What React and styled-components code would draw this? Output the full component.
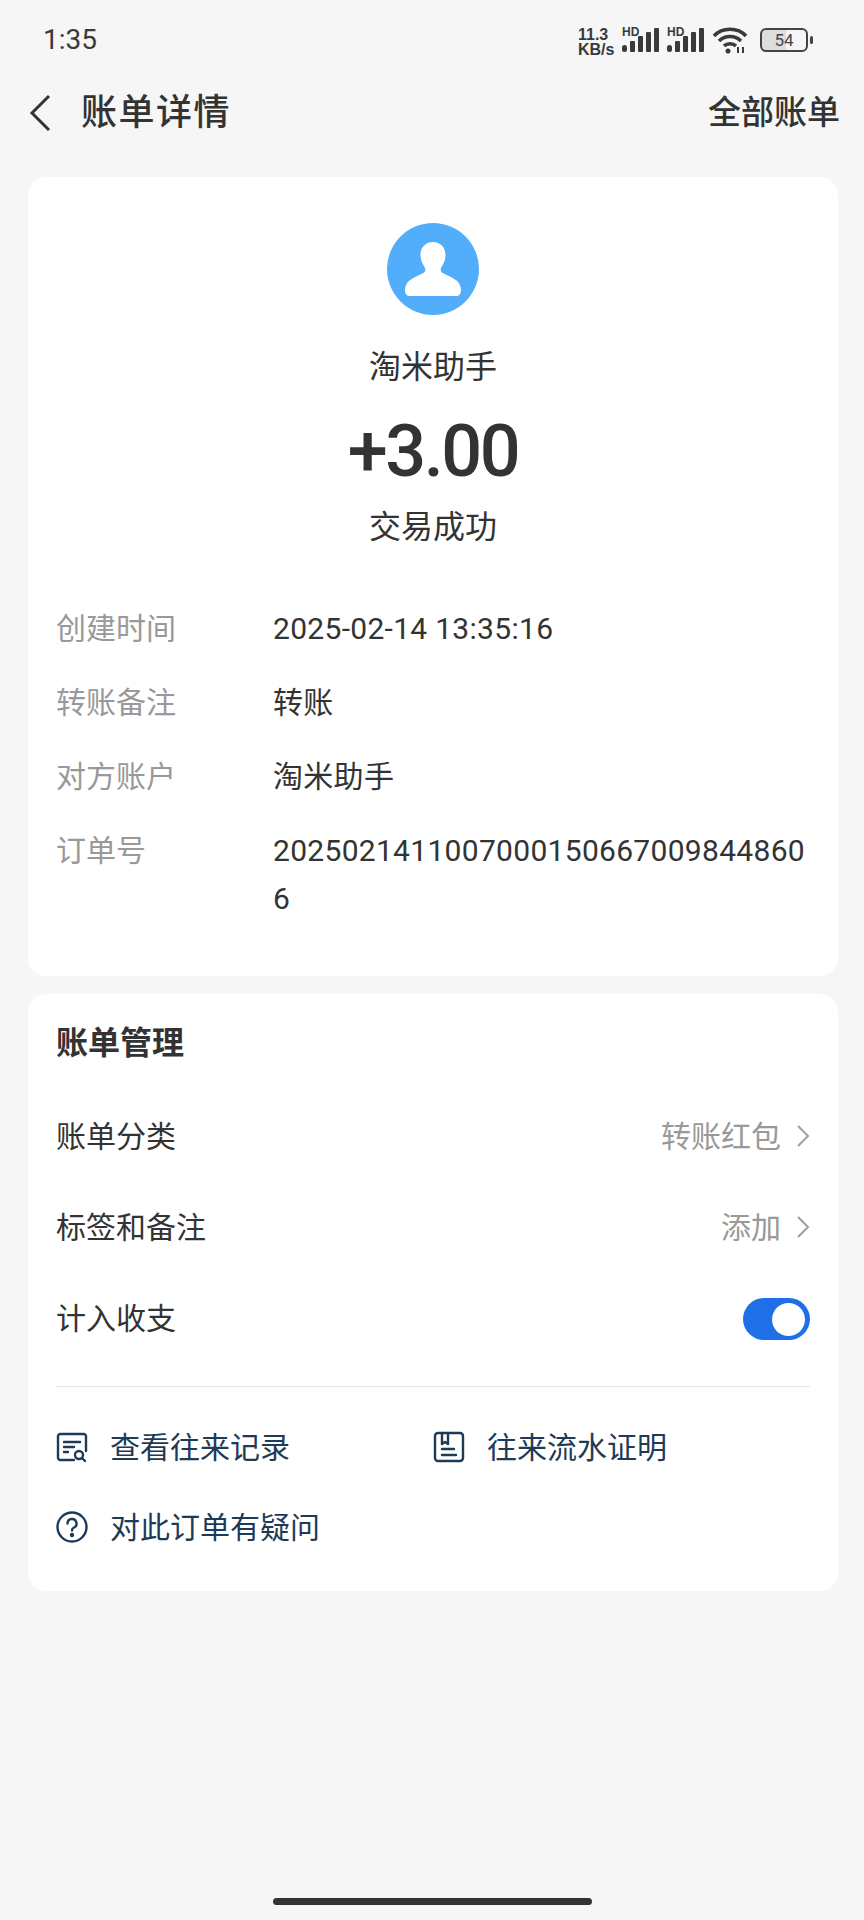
import React from 'react';
import styled, { createGlobalStyle } from 'styled-components';

const CJK = `Roboto, "Noto Sans CJK SC", sans-serif`;

const GlobalStyle = createGlobalStyle`
    html, body {
        margin: 0;
        padding: 0;
        background: #f6f6f6;
    }
    * {
        box-sizing: border-box;
    }
`;

const Page = styled.div`
    width: 864px;
    height: 1920px;
    background: #f6f6f6;
    color: #333;
    font-family: ${CJK};
    display: flex;
    flex-direction: column;
    overflow: hidden;
`;

const StatusBar = styled.div`
    height: 80px;
    padding: 0 56px 0 43px;
    display: flex;
    align-items: center;
    justify-content: space-between;
`;

const Time = styled.span`
    font-size: 28px;
    line-height: 1;
    color: #3a3a3a;
`;

const StatusIcons = styled.div`
    display: flex;
    align-items: center;
    gap: 7px;
`;

const NetSpeed = styled.div`
    font-family: "Liberation Sans", sans-serif;
    font-size: 16px;
    line-height: 15px;
    font-weight: 700;
    color: #3a3a3a;
    width: 37px;
    margin-top: 3px;
`;

const Signal = styled.div`
    position: relative;
    width: 38px;
    height: 24px;
    span {
        position: absolute;
        left: 0;
        top: -1px;
        font-family: "Liberation Sans", sans-serif;
        font-size: 12px;
        line-height: 10px;
        font-weight: 700;
        color: #3a3a3a;
    }
    svg {
        display: block;
    }
`;

const Battery = styled.div`
    width: 48px;
    height: 24px;
    border: 2px solid #444;
    border-radius: 6px;
    background: linear-gradient(90deg, #ddd 54%, #f6f6f6 54%);
    font-size: 17px;
    line-height: 20px;
    text-align: center;
    color: #444;
    position: relative;
    margin-left: 5px;
    &::after {
        content: "";
        position: absolute;
        right: -7px;
        top: 6px;
        width: 3px;
        height: 8px;
        border-radius: 2px;
        background: #444;
    }
`;

const Header = styled.div`
    height: 60px;
    margin-bottom: 37px;
    padding: 0 24px 0 28px;
    display: flex;
    align-items: center;
`;

const BackIcon = styled.svg`
    width: 24px;
    height: 40px;
    margin: 5px 29px 0 0;
`;

const Title = styled.h1`
    flex: 1;
    margin: 5px 0 0;
    font-size: 36px;
    line-height: 60px;
    font-weight: 500;
    letter-spacing: 1.5px;
    color: #333;
`;

const HeaderLink = styled.span`
    font-size: 33px;
    font-weight: 500;
    color: #333;
`;

const Card = styled.section`
    margin: ${p => p.$top || 0}px 26px 0 28px;
    background: #fff;
    border-radius: 18px;
    padding: ${p => p.$padding};
`;

const Avatar = styled.svg`
    display: block;
    width: 92px;
    height: 92px;
    margin: 0 auto;
`;

const Name = styled.div`
    margin-top: 30px;
    text-align: center;
    font-size: 32px;
    line-height: 44px;
    color: #333;
`;

const Amount = styled.div`
    margin-top: 21px;
    text-align: center;
    font-size: 72px;
    line-height: 84px;
    font-weight: 500;
    letter-spacing: -2.4px;
    color: #333;
`;

const Status = styled.div`
    margin-top: 11px;
    text-align: center;
    font-size: 32px;
    line-height: 44px;
    color: #333;
`;

const DetailList = styled.div`
    margin-top: 56px;
    display: flex;
    flex-direction: column;
    gap: 26px;
`;

const DetailRow = styled.div`
    display: flex;
    font-size: 30px;
    line-height: 48px;
`;

const DetailLabel = styled.span`
    flex: 0 0 217px;
    color: #999;
`;

const DetailValue = styled.span`
    flex: 1;
    min-width: 0;
    color: #333;
    letter-spacing: 0.3px;
    word-break: break-all;
`;

const SectionTitle = styled.h2`
    margin: 0 0 42px;
    font-size: 32px;
    line-height: 50px;
    font-weight: 700;
    color: #333;
`;

const ManageRow = styled.div`
    height: 48px;
    margin-bottom: 43px;
    display: flex;
    align-items: center;
    justify-content: space-between;
    font-size: 30px;
    color: #333;
`;

const RowValue = styled.span`
    display: flex;
    align-items: center;
    gap: 14px;
    color: #999;
    svg {
        margin-right: -1px;
        margin-top: 3px;
    }
`;

const Toggle = styled.span`
    width: 67px;
    height: 42px;
    margin-top: 6px;
    border-radius: 21px;
    background: #1e6fe8;
    display: flex;
    align-items: center;
    justify-content: flex-end;
    padding-right: 5px;
    &::after {
        content: "";
        width: 33px;
        height: 33px;
        border-radius: 50%;
        background: #fff;
    }
`;

const Divider = styled.div`
    height: 1px;
    background: #e6e6e6;
    margin-top: 46px;
    margin-bottom: 34px;
`;

const Links = styled.div`
    display: grid;
    grid-template-columns: 377px 1fr;
    row-gap: 32px;
`;

const LinkItem = styled.div`
    display: flex;
    align-items: center;
    gap: 22px;
    height: 48px;
    font-size: 30px;
    color: #1d3b57;
`;

const LinkIcon = styled.svg`
    width: 32px;
    height: 32px;
    margin-top: 4px;
    flex: none;
`;

const HomeBar = styled.div`
    width: 319px;
    height: 7px;
    margin: auto auto 15px;
    border-radius: 4px;
    background: #333;
`;

const SignalBars = () => (
    <svg width="37" height="24" viewBox="0 0 37 24" fill="#3a3a3a">
        <rect x="0" y="17" width="5" height="7" rx="2.5" />
        <rect x="8" y="13" width="5" height="11" rx="1" />
        <rect x="16" y="8" width="5" height="16" rx="1" />
        <rect x="24" y="4" width="5" height="20" rx="1" />
        <rect x="32" y="0" width="5" height="24" rx="1" />
    </svg>
);

const Chevron = () => (
    <svg width="16" height="24" viewBox="0 0 16 24" fill="none" stroke="#a0a0a0" strokeWidth="2">
        <path d="M3 2l10 10L3 22" />
    </svg>
);

const Ink = { fill: 'none', stroke: '#1d3b57', strokeWidth: 2.4, strokeLinecap: 'round', strokeLinejoin: 'round' };

const details = [
    ['创建时间', '2025-02-14 13:35:16'],
    ['转账备注', '转账'],
    ['对方账户', '淘米助手'],
    ['订单号', '20250214110070001506670098448606'],
];

const App = () => {
    return (
        <Page>
            <GlobalStyle />
            <StatusBar>
                <Time>1:35</Time>
                <StatusIcons>
                    <NetSpeed>11.3<br />KB/s</NetSpeed>
                    <Signal><span>HD</span><SignalBars /></Signal>
                    <Signal><span>HD</span><SignalBars /></Signal>
                    <svg width="36" height="28" viewBox="0 0 36 28" fill="none" stroke="#3a3a3a" strokeWidth="3.6">
                        <path d="M2 10C10 1 26 1 34 10" />
                        <path d="M7 15c6-6 16-6 22 0" />
                        <path d="M12 20c3-3 9-3 12 0" />
                        <circle cx="16" cy="25" r="2.500" fill="#3a3a3a" stroke="none" />
                        <path d="M26 21v6M31 21v6" strokeWidth="2" />
                    </svg>
                    <Battery>54</Battery>
                </StatusIcons>
            </StatusBar>

            <Header>
                <BackIcon viewBox="0 0 24 40" fill="none" stroke="#333" strokeWidth="3">
                    <path d="M21 3L4 20l17 17" />
                </BackIcon>
                <Title>账单详情</Title>
                <HeaderLink>全部账单</HeaderLink>
            </Header>

            <Card $padding="46px 28px 53px">
                <Avatar viewBox="0 0 92 92">
                    <circle cx="46" cy="46" r="46" fill="#52aefa" />
                    <path
                        d="M46 19c-7.500 0-12.500 5.500-12.500 13 0 5 2 9 4 12 1.500 2.500 1 5-2 6.500-4 2-12 5-15 9-1.500 2-2.500 5-2.500 8 0 3 2 5.500 4 5.500h48c2 0 4-2.500 4-5.500 0-3-1-6-2.500-8-3-4-11-7-15-9-3-1.500-3.500-4-2-6.500 2-3 4-7 4-12 0-7.500-5-13-12.500-13z"
                        fill="#fff"
                    />
                </Avatar>
                <Name>淘米助手</Name>
                <Amount>+3.00</Amount>
                <Status>交易成功</Status>
                <DetailList>
                    {details.map(([label, value]) => (
                        <DetailRow key={label}>
                            <DetailLabel>{label}</DetailLabel>
                            <DetailValue>{value}</DetailValue>
                        </DetailRow>
                    ))}
                </DetailList>
            </Card>

            <Card $top={18} $padding="24px 28px 42px">
                <SectionTitle>账单管理</SectionTitle>
                <ManageRow>
                    账单分类
                    <RowValue>转账红包<Chevron /></RowValue>
                </ManageRow>
                <ManageRow>
                    标签和备注
                    <RowValue>添加<Chevron /></RowValue>
                </ManageRow>
                <ManageRow>
                    计入收支
                    <Toggle />
                </ManageRow>
                <Divider />
                <Links>
                    <LinkItem>
                        <LinkIcon viewBox="0 0 32 32" {...Ink}>
                            <path d="M18 29H4a2.500 2.500 0 0 1-2-2V5a2.500 2.500 0 0 1 2-2h24a2.500 2.500 0 0 1 2 2v15" />
                            <path d="M8 11h16M8 16h10M8 21h4" />
                            <circle cx="23" cy="24" r="4" />
                            <path d="M26 27l3 3" />
                        </LinkIcon>
                        查看往来记录
                    </LinkItem>
                    <LinkItem>
                        <LinkIcon viewBox="0 0 32 32" {...Ink}>
                            <rect x="2" y="2" width="28" height="28" rx="3" />
                            <path d="M9 2v11l3-2 3 2V2" />
                            <path d="M9 18h12M9 24h14" />
                        </LinkIcon>
                        往来流水证明
                    </LinkItem>
                    <LinkItem>
                        <LinkIcon viewBox="0 0 32 32" {...Ink}>
                            <circle cx="16" cy="16" r="14.500" />
                            <path d="M11.500 12.500a4.500 4.500 0 1 1 6.500 4c-1.500.8-2 1.500-2 3" />
                            <circle cx="16" cy="24" r="1" />
                        </LinkIcon>
                        对此订单有疑问
                    </LinkItem>
                </Links>
            </Card>

            <HomeBar />
        </Page>
    );
};

export default App;
